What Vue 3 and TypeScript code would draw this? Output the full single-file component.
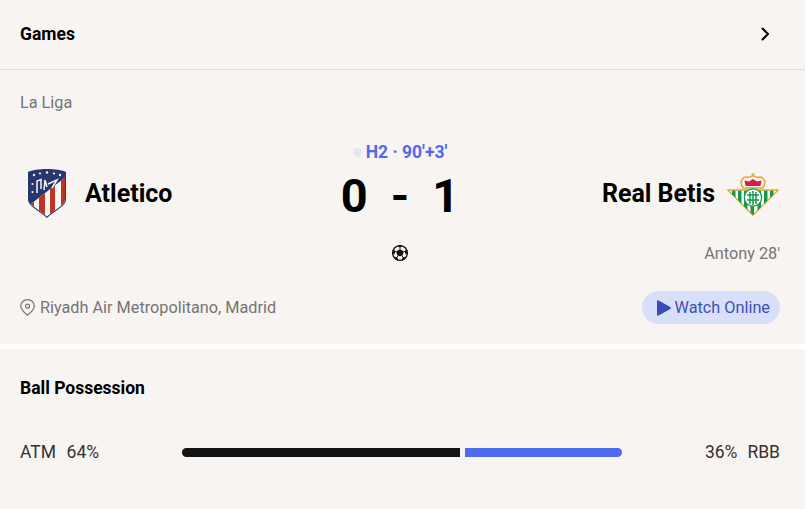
<script setup lang="ts">
const homeShare: number = 64
const awayShare: number = 36
const redStripes: number[][] = [[3, 4], [12, 6], [23, 5], [34, 4]]
const betisStripes: number[] = [5, 11, 17, 23.5, 30.5, 37, 43]
</script>

<template>
  <main class="page">
    <section class="card games">
      <header class="games-head">
        <h2>Games</h2>
        <svg class="chev" width="24" height="24" viewBox="0 0 24 24" fill="none">
          <path d="M9.5 6.5 15 12l-5.5 5.5" stroke="#000" stroke-width="2" stroke-linecap="round" stroke-linejoin="round" />
        </svg>
      </header>
      <div class="match">
        <div class="league">La Liga</div>
        <div class="status"><i class="dot"></i><span>H2 · 90'+3'</span></div>
        <div class="score-row">
          <div class="team">
            <svg class="crest" width="40" height="50" viewBox="0 0 40 50">
              <clipPath id="atm-clip"><path d="M2 5C9 1.5 31 1.5 38 5V32C38 37 26 43 20 48.5 14 43 2 37 2 32Z" /></clipPath>
              <clipPath id="atm-diag"><path d="M0 39 40 8V50H0Z" /></clipPath>
              <path d="M1 4C8 0 32 0 39 4V32C39 38 26 44 20 50 14 44 1 38 1 32Z" fill="#26386f" />
              <g clip-path="url(#atm-clip)">
                <path d="M0 39 40 8V50H0Z" fill="#f8f4f1" />
                <g clip-path="url(#atm-diag)">
                  <rect v-for="s in redStripes" :key="s[0]" :x="s[0]" y="0" :width="s[1]" height="50" fill="#bd3326" />
                </g>
              </g>
              <path d="M10 25V13l4-1.500V21M17 22l1-10 2 7M21 16l9-4-5 8" stroke="#f8f4f1" stroke-width="1.500" fill="none" />
              <g fill="#f8f4f1">
                <circle cx="7" cy="7" r="1.200" /><circle cx="20" cy="4.5" r="1.200" /><circle cx="33" cy="7" r="1.200" />
                <circle cx="5.5" cy="16" r="1.100" /><circle cx="5.5" cy="24" r="1.100" /><circle cx="13" cy="5.5" r="1.100" />
                <circle cx="27" cy="5.5" r="1.100" />
              </g>
            </svg>
            <span>Atletico</span>
          </div>
          <div class="score"><span>0</span><span>-</span><span>1</span></div>
          <div class="team right">
            <span>Real Betis</span>
            <svg class="crest betis" width="52" height="46" viewBox="0 -2 52 46">
              <clipPath id="rb-clip"><path d="M1 18H51L26 43Z" /></clipPath>
              <path d="M.8 18H51.2L26 43.2Z" fill="#fff" stroke="#e8a52e" stroke-width="1.300" stroke-linejoin="round" />
              <g clip-path="url(#rb-clip)" fill="#0f9a4c">
                <rect v-for="x in betisStripes" :key="x" :x="x" y="18.7" width="3.5" height="25" />
              </g>
              <path d="M16.500 16C11 10 16 3.500 21.500 5.500L26 3.500 30.500 5.500C36 3.500 41 10 35.500 16Z" fill="#f8f4f1" stroke="#e8a52e" stroke-width="1.500" />
              <path d="M18.500 14 17.500 8.500 22 9.500 26 7 30 9.500 34.500 8.500 33.500 14Z" fill="#dd1a4a" />
              <path d="M26 4V1M24.500 2H27.500" stroke="#e8a52e" stroke-width="1.200" />
              <circle cx="26" cy="25.5" r="8.700" fill="#fff" stroke="#0f9a4c" stroke-width="1.300" />
              <path d="M20 23H32M20 28H32M23 20V32M26 19V33M29 20V32" stroke="#0f9a4c" stroke-width="1.500" fill="none" />
            </svg>
          </div>
        </div>
        <div class="events">
          <div></div>
          <svg class="ball" width="16" height="16" viewBox="0 0 16 16">
            <circle cx="8" cy="8" r="8" fill="#111" />
            <circle cx="8" cy="8" r="5" fill="none" stroke="#f8f4f1" stroke-width="3.400" />
            <path d="M8 5 10.850 7.070 9.760 10.430H6.240L5.150 7.070Z" fill="#111" />
            <path d="M8 5V1M10.850 7.070 14.660 5.840M9.760 10.430 12.110 13.660M6.240 10.430 3.890 13.660M5.150 7.070 1.340 5.840" stroke="#111" stroke-width="1" />
            <path d="M5.500 1 8 2.500 10.500 1 8 .2ZM14.800 4 12.700 6.300 13.500 9.500 15.800 8ZM1.200 4 3.300 6.300 2.500 9.500 .2 8ZM3 12 6 13.200 6 15.800 2.800 14ZM13 12 10 13.200 10 15.800 13.200 14Z" fill="#111" />
          </svg>
          <div class="scorer">Antony 28'</div>
        </div>
        <div class="foot">
          <div class="venue">
            <svg width="15" height="17" viewBox="0 0 15 17" fill="none" stroke="#757575" stroke-width="1.200">
              <path d="M7.5 16.200C4.800 14 .7 10.900 .7 7A6.800 6.400 0 0 1 14.300 7C14.300 10.900 10.200 14 7.500 16.200Z" stroke-linejoin="round" />
              <circle cx="7.5" cy="7.200" r="2" />
            </svg>
            <span>Riyadh Air Metropolitano, Madrid</span>
          </div>
          <button class="watch">
            <svg width="14" height="16" viewBox="0 0 14 16"><path d="M0 1.500C0 .4 .8 0 1.700 .5L13.200 7c.8.5.8 1.500 0 2L1.700 15.500C.8 16 0 15.600 0 14.500Z" fill="#3a4db5" /></svg>
            <span>Watch Online</span>
          </button>
        </div>
      </div>
    </section>
    <section class="card poss">
      <h2>Ball Possession</h2>
      <div class="poss-row">
        <div class="side"><span>ATM</span><span>{{ homeShare }}%</span></div>
        <div class="bars">
          <i class="bar home"></i>
          <i class="bar away"></i>
        </div>
        <div class="side away-side"><span>{{ awayShare }}%</span><span>RBB</span></div>
      </div>
    </section>
  </main>
</template>

<style>
html, body { margin: 0; background: #fff; }
</style>

<style scoped>
.page { width: 805px; height: 509px; overflow: hidden; font-family: Roboto, "Liberation Sans", sans-serif; }
.card { background: #f8f4f1; }
h2 { margin: 0; font-size: 17.5px; line-height: 20px; font-weight: 700; color: #000; }
.games { height: 344px; }
.games-head { height: 70px; box-sizing: border-box; padding: 0 28px 2px 20px; display: flex; align-items: center; justify-content: space-between; border-bottom: 1px solid #dfdbd8; }
.match { padding: 23px 25px 0 20px; }
.league { font-size: 16.25px; line-height: 20px; color: #757575; }
.status { margin-top: 29px; height: 20px; display: flex; justify-content: center; align-items: center; gap: 4px; font-size: 17.5px; font-weight: 700; color: #4f6bed; }
.dot { width: 9px; height: 9px; border-radius: 50%; background: #e6e6f2; }
.score-row { margin-top: 6px; display: grid; grid-template-columns: 1fr auto 1fr; align-items: start; height: 50px; }
.team { height: 50px; display: flex; align-items: center; gap: 18px; font-size: 25px; font-weight: 700; color: #000; padding-left: 7px; }
.team.right { justify-content: flex-end; gap: 12px; padding-left: 0; }
.crest { flex: none; }
.betis { margin-right: 1px; }
.score { display: flex; align-items: center; margin-top: 6px; font-size: 47px; line-height: 44px; font-weight: 700; color: #000; gap: 23px; }
.events { margin-top: 25px; height: 20px; display: grid; grid-template-columns: 1fr auto 1fr; align-items: center; }
.ball { display: block; }
.scorer { text-align: right; font-size: 16.25px; color: #757575; }
.foot { margin-top: 28px; display: flex; align-items: center; justify-content: space-between; height: 33px; }
.venue { display: flex; align-items: center; gap: 5px; font-size: 16.25px; color: #757575; }
.watch { border: 0; height: 33px; border-radius: 17px; background: #d8dff8; padding: 0 10px 0 15px; display: flex; align-items: center; gap: 4px; font: 16.25px Roboto, sans-serif; color: #3e50b4; }
.poss { margin-top: 5px; height: 160px; box-sizing: border-box; padding: 29px 25px 0 20px; }
.poss-row { margin-top: 44px; display: grid; grid-template-columns: 162px 1fr 158px; align-items: center; font-size: 17.5px; color: #333; height: 20px; }
.side { display: flex; gap: 10.5px; }
.away-side { justify-content: flex-end; gap: 10px; }
.bars { display: flex; gap: 5px; }
.bar { display: block; height: 9px; }
.home { flex: 278; background: #141414; border-radius: 5px 0 0 5px; }
.away { flex: 157; background: #4f6bed; border-radius: 0 5px 5px 0; }
</style>
